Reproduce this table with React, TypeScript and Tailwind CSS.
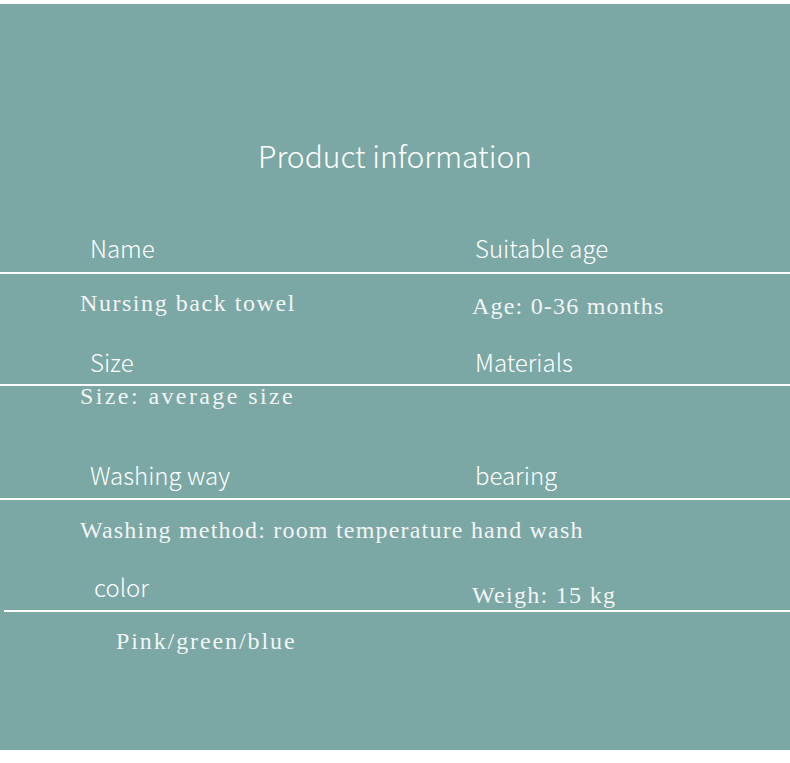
export default function App() {
  const label = "text-[24px] leading-[30px] font-light text-white [font-family:'Noto_Sans_CJK_SC','Noto_Sans',sans-serif]";
  const value = "text-[24px] leading-[30px] text-[#f3f5f5] whitespace-nowrap [font-family:'Liberation_Serif',serif]";

  return (
    <div className="w-[790px] h-[763px] bg-white pt-[4px]">
      <div className="h-[746px] bg-[#7ba7a4] flex flex-col">
        {/* Title */}
        <div className="h-[131px]" />
        <div className="h-[40px] flex items-center justify-center">
          <h1 className="text-[30px] leading-[40px] font-light text-white [font-family:'Noto_Sans_CJK_SC','Noto_Sans',sans-serif]">
            Product information
          </h1>
        </div>

        {/* Name / Suitable age */}
        <div className="h-[97px] grid grid-cols-[385px_1fr] items-end pb-[9px]">
          <div className={`pl-[90px] ${label}`}>Name</div>
          <div className={`pl-[90px] ${label}`}>Suitable age</div>
        </div>
        <div className="h-[2px] bg-white" />
        <div className="h-[60px] grid grid-cols-[385px_1fr] items-start">
          <div className={`pl-[80px] mt-[14px] tracking-[1.55px] ${value}`}>Nursing back towel</div>
          <div className={`pl-[87px] mt-[17px] tracking-[1.2px] ${value}`}>Age: 0-36 months</div>
        </div>

        {/* Size / Materials */}
        <div className="h-[50px] grid grid-cols-[385px_1fr] items-end pb-[7px]">
          <div className={`pl-[90px] ${label}`}>Size</div>
          <div className={`pl-[90px] ${label}`}>Materials</div>
        </div>
        <div className="h-[2px] bg-white" />
        <div className="h-[40px]">
          <div className={`pl-[80px] -mt-[1px] !leading-[22px] tracking-[2.4px] ${value}`}>Size: average size</div>
        </div>

        {/* Washing way / bearing */}
        <div className="h-[72px] grid grid-cols-[385px_1fr] items-end pb-[8px]">
          <div className={`pl-[90px] ${label}`}>Washing way</div>
          <div className={`pl-[90px] ${label}`}>bearing</div>
        </div>
        <div className="h-[2px] bg-white" />
        <div className="h-[50px]">
          <div className={`pl-[80px] mt-[15px] tracking-[1.2px] ${value}`}>
            Washing method: room temperature hand wash
          </div>
        </div>

        {/* color / weight */}
        <div className="h-[60px] grid grid-cols-[385px_1fr] items-end">
          <div className={`pl-[94px] pb-[8px] ${label}`}>color</div>
          <div className={`pl-[87px] pb-[1px] !leading-[28px] tracking-[1.3px] ${value}`}>Weigh: 15 kg</div>
        </div>
        <div className="h-[2px] ml-[4px] bg-white" />
        <div className={`pl-[116px] mt-[14px] tracking-[1.9px] ${value}`}>Pink/green/blue</div>
      </div>
    </div>
  );
}
